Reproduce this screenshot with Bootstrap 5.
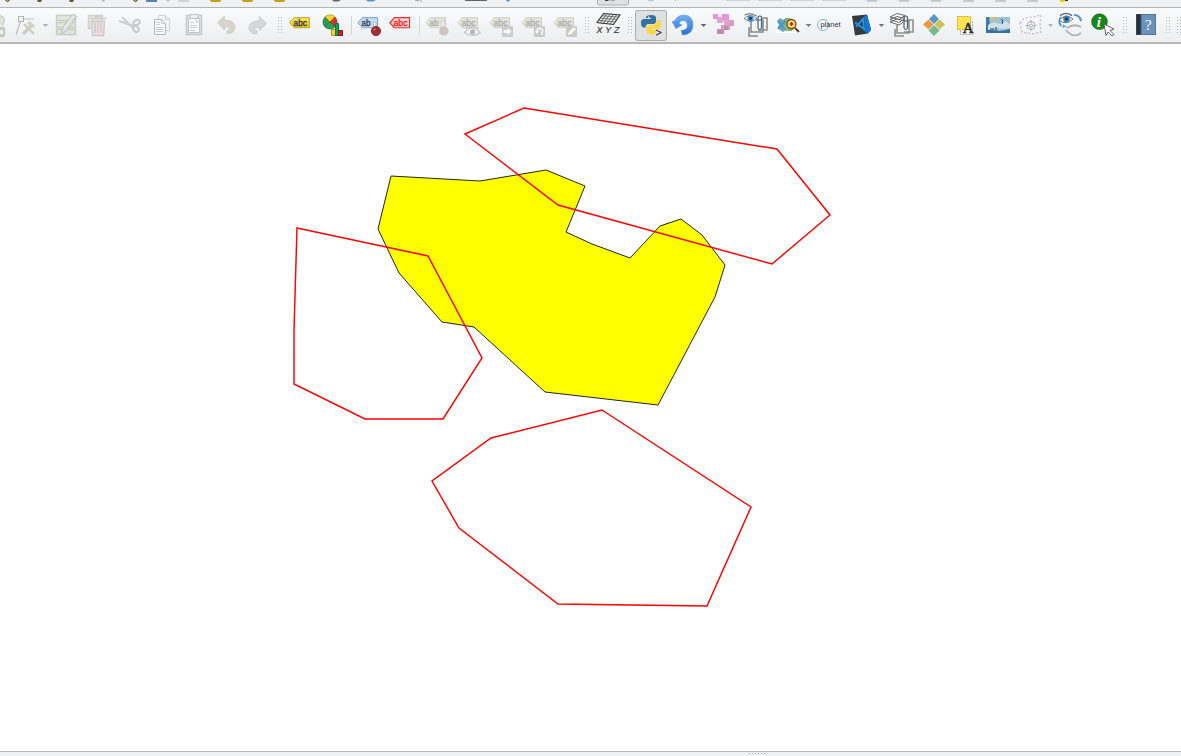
<!DOCTYPE html>
<html lang="en">
<head>
<meta charset="utf-8">
<meta name="viewport" content="width=device-width, initial-scale=1">
<title>Map canvas</title>
<link rel="stylesheet" href="https://cdn.jsdelivr.net/npm/bootstrap@5.3.0/dist/css/bootstrap.min.css">
<style>
body{font-family:"Liberation Sans",Arial,sans-serif}
svg{display:block;flex:none}
.upper-bar{height:8px;background:#f0f1f2;border-bottom:1px solid #b4b5b6}
.tool-bar{height:36px;background:linear-gradient(#fafbfc,#eceef0);border-bottom:2px solid #b7b7b7}
.tool-bar button{border:0;padding:0;background:none;flex:none}
.tool-bar button.pressed{background:#dfe0e1;box-shadow:inset 0 0 0 1px #adafb0;border-radius:3px;height:31px;margin-top:2px;overflow:hidden}
.tool-bar button.pressed svg{margin-top:-2px}
.off{opacity:.68}
.splitter{height:5px;background:#eff0f1;border-top:1px solid #b4b6b8}
text{font-family:"Liberation Sans",Arial,sans-serif}
.tag{font-size:8.5px;stroke-width:.3}
</style>
</head>
<body class="vh-100 overflow-hidden d-flex flex-column bg-white">
<svg width="0" height="0" class="position-absolute">
<defs>
<linearGradient id="gold" x2="0" y2="1"><stop stop-color="#fbec62"/><stop offset="1" stop-color="#e0c21a"/></linearGradient>
<linearGradient id="azure" x2="0" y2="1"><stop stop-color="#75b1f4"/><stop offset="1" stop-color="#2670d2"/></linearGradient>
<symbol id="grip" viewBox="0 0 12 34"><path d="M4 9h1M4 12h1M4 15h1M4 18h1M4 21h1M4 24h1M7 9h1M7 12h1M7 15h1M7 18h1M7 21h1M7 24h1" transform="translate(0 .5)" stroke="#b4b7ba"/></symbol>
<symbol id="label" viewBox="0 0 22 12"><path d="M5.500 .7H21.300V11.300H5.500L.7 6z"/></symbol>
<symbol id="caret" viewBox="0 0 9 34"><path d="M1.700 16H7.300L4.500 19z"/></symbol>
</defs>
</svg>

<header class="upper-bar flex-shrink-0">
<svg width="1181" height="7" viewBox="0 0 1181 7">
<g fill="#66563f"><path d="M5 0h5L8 2H7zM37 0h5l-1 2h-3zM69 0h5l-1 2h-3zM133 0h5l-2 2h-1z"/></g>
<path d="M7 0h1v1H7zM135 0h1v1h-1z" fill="#e4c900"/>
<path d="M101 0h4l-1 2h-1zM166 0h4l-2 2z" fill="#bfc0c1"/>
<path d="M146 0h11v2h-11z" fill="#5685b5"/><path d="M178 0h11v2h-11z" fill="#d2d3d4"/>
<path d="M210 0h11v1l-2 1h-7l-2-1zM242 0h11v1l-2 1h-7l-2-1zM274 0h11v1l-2 1h-7l-2-1z" fill="#c5a213"/>
<path d="M332 0h9l-3 1.500h-4zM465 0h22v1h-22z" fill="#606265"/>
<path d="M366 0h10l-3 1.500h-5zM506 0h4l-1 1.500h-2z" fill="#5294ce"/>
<path d="M415 0l4 1M420 0l2 2" stroke="#999"/>
<path d="M597.500 -4V3q0 2 2 2h27q2 0 2-2V-4z" fill="#dfe0e1" stroke="#adafb0"/>
<path d="M605 0h4l-1 1h-3z" fill="#444"/><path d="M610 .5h5" stroke="#aaa"/>
<path d="M648 0l3 1 3-1M675 0l1 1" stroke="#bbb" fill="none"/>
<path d="M726 0h24v1h-24zM758 0h24v1h-24zM790 0h24v1h-24zM822 0h24v1h-24z" fill="#d2d2d3"/>
<path d="M866 0h12l-2 2h-8zM898 0h12l-2 2h-8zM930 0h12l-2 2h-8zM963 0h11v2h-11zM995 0h11v2h-11zM1027 0h11v2h-11z" fill="#c7c8c9"/>
<path d="M1059 0h7l-2 2h-3z" fill="#ddd400"/><path d="M1065 0h3v1h-3z" fill="#333"/>
</svg>
</header>

<nav class="tool-bar d-flex flex-nowrap align-items-start flex-shrink-0 overflow-hidden">
<button aria-label="Digitize"><svg class="off" width="12" height="34" viewBox="0 8 12 34"><path d="M-6 16h8q3 2 2 6l-2 4" fill="#d9dad0" stroke="#aaaba3"/><rect x="-5" y="27.500" width="9.500" height="9" rx="1" fill="#bdb8a7" stroke="#aaa696"/><path d="M-1 30l4 4m0-4l-4 4" stroke="#fff" stroke-width="1.500"/></svg></button>
<button aria-label="Vertex tool"><svg class="off" width="30" height="34" viewBox="12 8 30 34"><path d="M16 35L20.500 21M23 19h11" fill="none" stroke="#a5a7a6" stroke-width="1.200"/><rect x="18.500" y="16.500" width="5" height="5" fill="#eef0e9" stroke="#949990"/><path d="M24 24l10 10" stroke="#bdb9a9" stroke-width="2.400"/><path d="M23 34l9-9M28 22l6 5" stroke="#c2bfb0" stroke-width="3.400"/></svg></button>
<button aria-label="Vertex tool menu"><svg width="8" height="34" fill="#b2b4b6"><use href="#caret" x="-1" width="9" height="34"/></svg></button>
<button aria-label="Edit attributes"><svg class="off" width="32" height="34" viewBox="50 8 32 34"><g fill="#dde0d1" stroke="#b7baa9" stroke-width="1.300"><path d="M56.500 15.500h19v5h-19zM56.500 22.500h19v5h-19zM56.500 29.500h19v5h-19z"/></g><path d="M61 34l1.500-6L72.500 14l4 2.500L66.500 31z" fill="#d3d3d2" stroke="#aaa9a5"/><path d="M64 29L73.500 16" stroke="#f5f5f5"/></svg></button>
<button aria-label="Delete selected"><svg class="off" width="32" height="34" viewBox="82 8 32 34"><path d="M88.500 15.500h14v13h-14z" fill="#dfe1d3" stroke="#bfc0b0" stroke-width="1.300"/><path d="M91.500 21.500h13l-1 14h-11z" fill="#e5dbdb" stroke="#c1b0b1" stroke-width="1.300"/><path d="M89.500 18.500h17M95 16.500h6M95 23v10M98 23v10M101 23v10" stroke="#cbb3b6" stroke-width="1.500"/></svg></button>
<button aria-label="Cut"><svg class="off" width="32" height="34" viewBox="114 8 32 34"><path d="M119 21l14 5M122 17l11 11" stroke="#bbbdbd" stroke-width="2"/><g fill="none" stroke="#b0b0b0" stroke-width="1.700"><ellipse cx="136.500" cy="22.500" rx="3.500" ry="2.300" transform="rotate(-28 136.500 22.500)"/><ellipse cx="136" cy="29" rx="2.500" ry="3.300" transform="rotate(-35 136 29)"/></g></svg></button>
<button aria-label="Copy"><svg class="off" width="32" height="34" viewBox="146 8 32 34"><path d="M158.500 15.500h7l4 4v11h-11z" fill="#f5f5f5" stroke="#c6c6c6"/><path d="M165.500 15.500v4h4" fill="none" stroke="#bbb"/><path d="M154.500 19.500h7l4 4v11h-11z" fill="#fafafa" stroke="#9a9a9a"/><path d="M161.500 19.500v4h4M156 22.500h4M156 24.500h4M156 27.500h7M156 29.500h7M156 31.500h7" fill="none" stroke="#b8b8b8"/></svg></button>
<button aria-label="Paste"><svg class="off" width="32" height="34" viewBox="178 8 32 34"><rect x="186.500" y="15.500" width="15" height="19" fill="#dcdcd8" stroke="#b4b4b4" stroke-width="1.500"/><path d="M188.500 18.500h11v14h-11z" fill="#fff" stroke="#b0b0b0"/><path d="M190 14.500h8v4h-8z" fill="#eee" stroke="#a5a5a5"/><path d="M190 22.500h4M190 25.500h7M190 27.500h7M190 30.500h5M196 19v3h3" stroke="#b8b8b8" fill="none"/></svg></button>
<button aria-label="Undo"><svg class="off" width="32" height="34" viewBox="210 8 32 34"><path d="M217.500 22.500l7-6.500v4.500c8-1 11 4 10.500 7.500q-1 5.500-8 5.500v-3c4 0 4-4-2.500-3.500v3z" fill="#cbc4bc" stroke="#bdb7af" stroke-width=".8"/></svg></button>
<button aria-label="Redo"><svg class="off" width="32" height="34" viewBox="242 8 32 34"><path d="M266.500 23.500l-7-7V21c-8-1-11 4-10.500 7.500q1 5 8 5.500v-3c-4-1-4-4 2.500-3.500v3z" fill="#c8cac8" stroke="#b0b2b0" stroke-width=".8"/></svg></button>
<svg width="12" height="34"><use href="#grip"/></svg>
<button aria-label="Layer labeling"><svg width="32" height="34" viewBox="286 8 32 34"><use href="#label" x="289" y="17" width="21" height="11.500" fill="url(#gold)" stroke="#b99a16"/><text class="tag" x="293.500" y="25.500" textLength="13.500" lengthAdjust="spacingAndGlyphs" fill="#333" stroke="#333">abc</text></svg></button>
<button aria-label="Diagram options"><svg width="32" height="34" viewBox="318 8 32 34"><circle cx="330" cy="22" r="7" fill="#1fa35a" stroke="#34533a" stroke-width=".7"/><path d="M330 22l-5-5a7 7 0 0 1 10 0z" fill="#ffcf22"/><path d="M330 22l5-5a7 7 0 0 1 0 10z" fill="#d5322d"/><path d="M330 22l-6 4M330 22l-5-5M330 22l5-5M330 22l5 5" stroke="#665423" stroke-width=".6"/><path d="M331.500 29.500h4v6h-4z" fill="#ffd21f" stroke="#bb941c"/><path d="M335.500 23.500h3v12h-3z" fill="#0ba64b" stroke="#08773a"/><path d="M338.500 30.500h4v5h-4z" fill="#c5262a" stroke="#7d171a"/></svg></button>
<svg width="4" height="34"><path d="M1.500 8v19" stroke="#d5d7d9"/></svg>
<button aria-label="Highlight pinned labels"><svg width="30" height="34" viewBox="354 8 30 34"><use href="#label" x="357" y="17" width="21.500" height="11.500" fill="#c0dcf7" stroke="#6c9fd2"/><text class="tag" x="361.500" y="25.500" textLength="9" lengthAdjust="spacingAndGlyphs" fill="#303841" stroke="#303841">ab</text><path d="M373.500 22h2.500v6h-2.500z" fill="#f6f6f6" stroke="#aaa" stroke-width=".6"/><circle cx="376" cy="31" r="4.600" fill="#a42c31" stroke="#813034"/><circle cx="374.500" cy="29.500" r="1" fill="#d08482"/></svg></button>
<button aria-label="Toggle unplaced labels"><svg width="34" height="34" viewBox="384 8 34 34"><use href="#label" x="389" y="17" width="21.500" height="11.500" fill="#fbd9d9" stroke="#f82828" stroke-width="1.300"/><text class="tag" x="393.500" y="25.500" textLength="14" lengthAdjust="spacingAndGlyphs" fill="#f01818" stroke="#f01818">abc</text></svg></button>
<svg width="4" height="34"><path d="M1.500 8v19" stroke="#d5d7d9"/></svg>
<button aria-label="Pin labels"><svg class="off" width="31" height="34" viewBox="422 8 31 34"><use href="#label" x="425" y="17" width="21.500" height="11.500" fill="#dddccf" stroke="#bbbaab"/><text class="tag" x="429.500" y="25.500" textLength="9" lengthAdjust="spacingAndGlyphs" fill="#8b8b86" stroke="#8b8b86">ab</text><path d="M442 21h2v7h-2z" fill="#fff" stroke="#aaa" stroke-width=".5"/><circle cx="443.800" cy="31" r="4.700" fill="#bfafad"/></svg></button>
<button aria-label="Show labels"><svg class="off" width="32" height="34" viewBox="453 8 32 34"><use href="#label" x="457" y="17" width="21.500" height="11.500" fill="#dddccf" stroke="#bbbaab"/><text class="tag" x="461.500" y="25.500" textLength="14" lengthAdjust="spacingAndGlyphs" fill="#8b8b86" stroke="#8b8b86">abc</text><path d="M464.500 32.500q7.500-9 15.500 0q-7 6-15.500 0z" fill="#fff" stroke="#aaa" stroke-width="1.200"/><circle cx="472.500" cy="32" r="2.700" fill="#979da1"/><path d="M465 29q7-5 14 0" fill="none" stroke="#b0b0b0"/></svg></button>
<button aria-label="Move label"><svg class="off" width="32" height="34" viewBox="485 8 32 34"><use href="#label" x="489" y="17" width="21.500" height="11.500" fill="#dddccf" stroke="#bbbaab"/><text class="tag" x="493.500" y="25.500" textLength="14" lengthAdjust="spacingAndGlyphs" fill="#8b8b86" stroke="#8b8b86">abc</text><rect x="502" y="26" width="11" height="11" rx="1" fill="#b8baB5"/><path d="M503.500 30h4v-2.500l4 4-4 4V33h-4z" fill="#fff"/></svg></button>
<button aria-label="Rotate label"><svg class="off" width="32" height="34" viewBox="517 8 32 34"><use href="#label" x="521" y="17" width="21.500" height="11.500" fill="#dddccf" stroke="#bbbaab"/><text class="tag" x="525.500" y="25.500" textLength="14" lengthAdjust="spacingAndGlyphs" fill="#8b8b86" stroke="#8b8b86">abc</text><rect x="534" y="26" width="11" height="11" rx="1" fill="#b8bab5"/><path d="M537 32q0-4 3.500-3.500T541.500 35" fill="none" stroke="#fff" stroke-width="1.700"/><path d="M535 31h4l-2 3z" fill="#fff"/></svg></button>
<button aria-label="Change label"><svg class="off" width="32" height="34" viewBox="549 8 32 34"><use href="#label" x="553" y="17" width="21.500" height="11.500" fill="#dddccf" stroke="#bbbaab"/><text class="tag" x="557.500" y="25.500" textLength="14" lengthAdjust="spacingAndGlyphs" fill="#8b8b86" stroke="#8b8b86">abc</text><rect x="566" y="26" width="11" height="11" rx="1" fill="#bdb9ad"/><path d="M568 35l1-3 5-5 2 2-5 5z" fill="#fff"/></svg></button>
<svg width="11" height="34"><use href="#grip" width="12" height="34"/></svg>
<button aria-label="XYZ"><svg width="32" height="34" viewBox="592 8 32 34"><path d="M603.500 13.500l16.500 1.500-6.500 9.500-16.500-2z" fill="#eee" stroke="#333" stroke-width="1.100"/><path d="M602 15.700l16.500 1.500M600.300 18l16.700 1.500M598.600 20.300l16.700 1.700M606.800 13.800l-6.500 9M610 14.100l-6.500 9.100M613.300 14.400l-6.500 9.200M616.600 14.700l-6.500 9.400" stroke="#555" stroke-width=".8"/><text x="596.500" y="33" textLength="23" font-size="9" fill="#333" stroke="#333" stroke-width=".2" font-style="italic">XYZ</text></svg></button>
<svg width="11" height="34"><use href="#grip" width="12" height="34"/></svg>
<button class="pressed" aria-label="Python console"><svg width="32" height="34" viewBox="635 8 32 34"><path d="M646 17.500q0-2.500 5-2.500t5 2.500V21q0 3-3 3h-4.500q-3 0-3 3.500h-2.500q-2-1-2-5q0-3.500 3-3.500h7v-1h-5z" fill="#3771a1"/><path d="M656.500 20h2.500q2.500 1 2.200 5q-.2 4-3.200 4h-6v1h4v2.500q-1 2-5 2t-4.500-3V28q0-3 3-3h4q3 0 3-3.500z" fill="#ffd749"/><circle cx="648.700" cy="17.200" r=".8" fill="#fff"/><path d="M656 30l5 2.500-5 2.700" fill="none" stroke="#444" stroke-width="1.200"/></svg></button>
<button aria-label="Reload plugin"><svg width="32" height="34" viewBox="667 8 32 34"><path d="M674.500 21q3-6 9.500-6 9 .5 9 10 0 9.500-10.500 10l-1.500-4.500q6.500-.5 6.500-5t-4-5q-3.500 0-4.500 3l3 1.500-6 3.500-4-7z" fill="url(#azure)" stroke="#4f91e0" stroke-width=".5"/></svg></button>
<button aria-label="Reload menu"><svg width="9" height="34" fill="#666"><use href="#caret" width="9" height="34"/></svg></button>
<button aria-label="Raster pixels"><svg width="32" height="34" viewBox="708 8 32 34"><path d="M713 14h5v5h-5zM722 14h7v7h-7z" fill="#ed92d4"/><path d="M717 17h6v6h-6zM724 20h6v6h-6z" fill="#e2a3d1"/><path d="M729 20h5v6h-5zM721 25h9v5h-9z" fill="#d29fc0"/><path d="M717 29h7v5h-7zM724 26h4v4h-4z" fill="#c28aae"/></svg></button>
<button aria-label="Show attachments"><svg width="32" height="34" viewBox="740 8 32 34"><g fill="none" stroke="#8b8c88" stroke-width="1.600"><path d="M761 18h6v12h-9M756 20h7v12h-12V21M749 27v9h9"/></g><path d="M758 28V17q2-2 3.500 0v11q-2 3-3.500 0" fill="none" stroke="#426585" stroke-width="1.200"/><path d="M744 18.500q6-6 13 0q-6 5.500-13 0z" fill="#fff" stroke="#666" stroke-width=".8"/><path d="M744.500 15q6-3 12 1" stroke="#555" fill="none"/><circle cx="750.500" cy="18.500" r="3.200" fill="#4792d8"/><circle cx="750.500" cy="18.500" r="1.400" fill="#18334b"/></svg></button>
<button aria-label="Map search"><svg width="32" height="34" viewBox="772 8 32 34"><path d="M776 17h24v16h-24z" fill="#fff"/><path d="M777 21l3-3 3 2 3-2 2 3-2 3 3 3-3 3-3 2-3-2-3-2 2-3z" fill="#5ea4ca"/><path d="M785 18h5l3 2 3 2v5l-4 4h-6l-3-4 3-4z" fill="#80b878"/><path d="M778 21l8 9M778 29l8-9" stroke="#3e838e" stroke-dasharray="2 1"/><circle cx="791.500" cy="24" r="4.500" fill="#fbe96a" stroke="#8d3b27" stroke-width="1.300"/><path d="M789.500 24h4M791.500 22v4" stroke="#aa3027" stroke-width="1.700"/><path d="M795 28l4 4" stroke="#5c3a25" stroke-width="2"/></svg></button>
<button aria-label="Map search menu"><svg width="9" height="34" fill="#777"><use href="#caret" width="9" height="34"/></svg></button>
<button aria-label="planet"><svg width="32" height="34" viewBox="813 8 32 34"><circle cx="823" cy="25" r="5.500" fill="none" stroke="#79bccc"/><text x="820.500" y="27" font-size="8" textLength="20" lengthAdjust="spacingAndGlyphs" fill="#333">planet</text></svg></button>
<button aria-label="Code editor"><svg width="32" height="34" viewBox="845 8 32 34"><path d="M852 16l15-1.500 4 15-3 4-13 2z" fill="#353b43"/><path d="M855 22.500l9 6.500-1-10-7 8" fill="none" stroke="#2595ec" stroke-width="1.800"/><path d="M864 16l3-1 4 15-3 3-3-1z" fill="#1478d3"/></svg></button>
<button aria-label="Code editor menu"><svg width="9" height="34" fill="#777"><use href="#caret" width="9" height="34"/></svg></button>
<button aria-label="Attached layers"><svg width="32" height="34" viewBox="886 8 32 34"><g fill="none" stroke="#8f908c" stroke-width="1.600"><path d="M907 20h6v12h-9M902 21h7v12h-12V25M895 29v7h9"/></g><path d="M904 28V17q2-2 3.500 0v11q-2 3-3.500 0" fill="none" stroke="#46627b" stroke-width="1.200"/><g fill="#fff" stroke="#555" stroke-width=".9"><path d="M890 22l7-3 8 2-6 4zM890 19.500l7-3 8 2-6 4zM890 17l7-3.500 8 2-6 4z"/></g></svg></button>
<button aria-label="Color tiles"><svg width="32" height="34" viewBox="918 8 32 34"><path d="M934 14l5 5-5 5-5-5z" fill="#529ac0"/><path d="M928.500 19.500l5 5-5 5-5.500-5z" fill="#ef9744"/><path d="M939.500 19.500l5.500 5-5.500 5-5-5z" fill="#c9c35c"/><path d="M934 25l5.500 5.500-5.500 5.500-5.500-5.500z" fill="#78b88c"/></svg></button>
<button aria-label="Text annotation"><svg width="32" height="34" viewBox="950 8 32 34"><path d="M960.500 21.500h12v13h-12z" fill="#f5f5f5" stroke="#aaa" stroke-dasharray="2 1"/><path d="M957.500 16.500h13v13h-13z" fill="#ffe54e" stroke="#c9ad25" stroke-dasharray="2 1"/><text x="962.800" y="32.500" font-size="15" style="font-family:'Liberation Serif',serif" fill="#242424" stroke="#242424" stroke-width=".5">A</text></svg></button>
<button aria-label="Geek map"><svg width="32" height="34" viewBox="982 8 32 34"><path d="M986 17h24v16h-24z" fill="#9cc0da"/><path d="M986 17h4l-1 16h-3z" fill="#3a79ac"/><path d="M988 25l6-3 6 2 5-3 5 3v4l-8 1-6-1-8 2z" fill="#cee0ea"/><path d="M986 30l6 0 8 1 10-2v4h-24z" fill="#3a719c"/><path d="M1001 19l2 2-1 3M996 27v4M990 29h4" stroke="#294a63" fill="none"/><text x="989" y="20.700" font-size="4.500" font-weight="bold" textLength="9.500" lengthAdjust="spacingAndGlyphs" fill="#e1c458">NEEK</text></svg></button>
<button aria-label="Select region"><svg class="off" width="32" height="34" viewBox="1014 8 32 34"><path d="M1020 23l4-5 9-1 8-2-1 9 1 8-9 2-10-2z" fill="none" stroke="#b5a09d" stroke-dasharray="2 2" stroke-width="1.300"/><g fill="none" stroke="#8b8d8e"><circle cx="1031" cy="25.500" r="4"/><circle cx="1031" cy="25.500" r="1.500"/><path d="M1031 20v3M1031 28v3M1025.500 25.500h3M1033.500 25.500h3"/></g></svg></button>
<button aria-label="Region menu"><svg width="9" height="34" fill="#b6b8ba"><use href="#caret" width="9" height="34"/></svg></button>
<button aria-label="Refresh view"><svg width="32" height="34" viewBox="1055 8 32 34"><path d="M1061 26q-3-4 0-9M1074 15q6 0 7 6" fill="none" stroke="#4b93d5" stroke-width="2"/><path d="M1059 20q7-7 14-1q-7 7-14 1z" fill="#fff" stroke="#555" stroke-width=".8"/><path d="M1060 15.500q6-4 12 0" fill="none" stroke="#444" stroke-width="1.100"/><circle cx="1066.500" cy="19" r="3.400" fill="#4183bd"/><circle cx="1066.500" cy="19" r="1.400" fill="#182d3e"/><path d="M1067 28q7-5 14-1M1066 30q7 9 15 3" fill="none" stroke="#b2b2b2" stroke-width="1.800"/><path d="M1063 24l4 3-5 1z" fill="#77abd5"/></svg></button>
<button aria-label="Identify"><svg width="32" height="34" viewBox="1087 8 32 34"><circle cx="1099.500" cy="21.700" r="7.900" fill="#168719" stroke="#0e6b14" stroke-width=".6"/><text x="1096.800" y="27" font-size="15" font-weight="bold" font-style="italic" style="font-family:'Liberation Serif',serif" fill="#fff">i</text><path d="M1104 24l10 5-4 1.500 4 4-2 1.500-4-4-2 3.500z" fill="#fff" stroke="#444" stroke-width=".8"/></svg></button>
<svg width="12" height="34"><use href="#grip"/></svg>
<button aria-label="Help"><svg width="30" height="34" viewBox="1131 8 30 34"><path d="M1136 14h20v21h-20z" fill="#384653"/><path d="M1141.500 14.500h14v20h-14z" fill="#6a92bd" stroke="#55779c"/><path d="M1137 15h3v19h-3z" fill="#202f3c"/><text x="1145" y="30" font-size="15" style="font-family:'Liberation Serif',serif" fill="#fff">?</text></svg></button>
<svg width="12" height="34"><use href="#grip" x="1" width="12" height="34"/></svg>
<svg width="8" height="34"><use href="#grip" width="12" height="34"/></svg>
</nav>

<main class="flex-grow-1 overflow-hidden">
<svg width="1181" height="707" viewBox="0 44 1181 707">
<path d="M391 176L480 181 546 170 585 186 566 232 592 244 630 258 660 226 681 219 702 235 725 265 715 297 658 405 545 392 474 327 442 322 399 273 378 229z" fill="#ff0" stroke="#232323"/>
<g fill="none" stroke="#f00" stroke-width="1.450">
<path d="M524 108L777 149 830 215 772 264 558 205 465 134z"/>
<path d="M297 228L428 256 482 358 443 419H365L294 384V330z"/>
<path d="M602 410L751 507 707 606 558 604 459 528 432 481 491 438z"/>
</g>
</svg>
</main>
<footer class="splitter flex-shrink-0 d-flex justify-content-center">
<svg width="1181" height="4"><path d="M749 1.500h1M752 1.500h1M755 1.500h1M758 1.500h1M761 1.500h1M764 1.500h1" stroke="#a8abae"/></svg>
</footer>
<script src="https://cdn.jsdelivr.net/npm/bootstrap@5.3.0/dist/js/bootstrap.bundle.min.js"></script>
</body>
</html>
